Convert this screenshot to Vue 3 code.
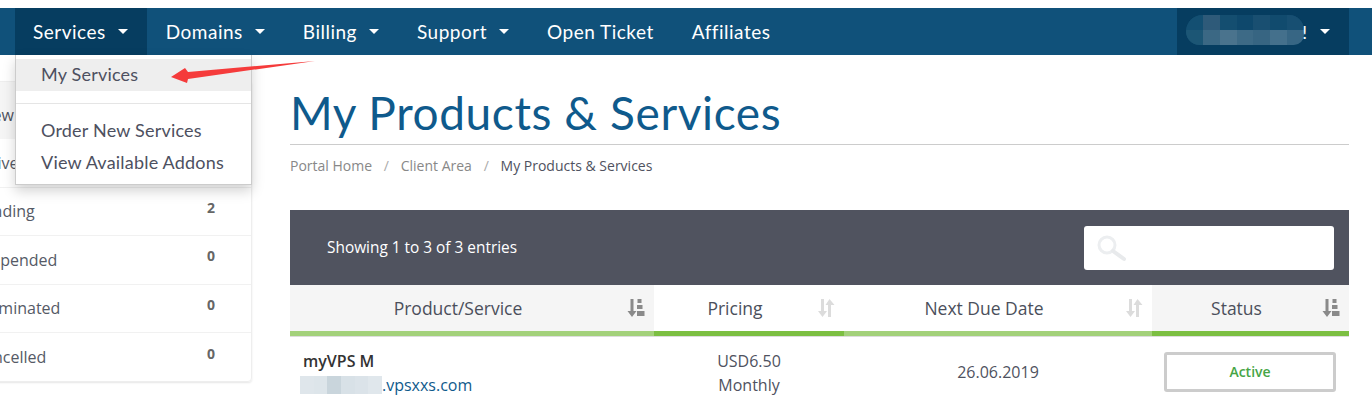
<script setup>
const navItems = [
  { label: 'Services', caret: true, active: true },
  { label: 'Domains', caret: true },
  { label: 'Billing', caret: true },
  { label: 'Support', caret: true },
  { label: 'Open Ticket' },
  { label: 'Affiliates' }
]
const stats = [
  { label: 'Active', n: 1 },
  { label: 'Pending', n: 2 },
  { label: 'Suspended', n: 0 },
  { label: 'Terminated', n: 0 },
  { label: 'Cancelled', n: 0 }
]
const columns = [
  { label: 'Product/Service', sort: 'on', cls: 'c1' },
  { label: 'Pricing', sort: 'off', cls: 'c2 sorted' },
  { label: 'Next Due Date', sort: 'off', cls: 'c3' },
  { label: 'Status', sort: 'on', cls: 'c4' }
]
const userCells = ['#134f72','#2e5a79','#144e70','#0e486c','#194f71','#114b6e','#174f72','#1c5675','#3b6884','#4a738d','#3d6a86','#376582','#44708c','#376684','#35627f']
const domainCells = ['#dfe6eb','#dde5ea','#c9d5dc','#d8e1e7','#dbe3e9','#e0e7ec']
</script>

<template>
  <div class="page">
    <nav class="nav">
      <ul class="menu">
        <li v-for="item in navItems" :key="item.label" class="menu-item" :class="{ active: item.active }">
          {{ item.label }}<span v-if="item.caret" class="caret"></span>
        </li>
      </ul>
      <div class="account">
        <div class="user-blur">
          <span v-for="(c, i) in userCells" :key="i" :style="{ background: c }"></span>
        </div>
        <span class="bang">!</span><span class="caret"></span>
      </div>
    </nav>

    <div class="dropdown">
      <div class="dd-item dd-active">My Services</div>
      <div class="dd-divider"></div>
      <div class="dd-item">Order New Services</div>
      <div class="dd-item">View Available Addons</div>
    </div>

    <svg class="arrow" width="150" height="26" viewBox="0 0 150 26">
      <path d="M0 17 L14 8 L17 12 L144 1 L17 19 L16 23 Z" fill="#f53b3b" />
    </svg>

    <div class="content">
      <aside class="sidebar">
        <div class="side-head">View</div>
        <div v-for="s in stats" :key="s.label" class="side-row">
          <span>{{ s.label }}</span><b>{{ s.n }}</b>
        </div>
      </aside>

      <main class="main">
        <h1 class="title">My Products &amp; Services</h1>
        <div class="crumbs">
          <span>Portal Home</span><i>/</i><span>Client Area</span><i>/</i><span class="current">My Products &amp; Services</span>
        </div>

        <div class="table-top">
          <span>Showing 1 to 3 of 3 entries</span>
          <div class="search">
            <svg width="34" height="28" viewBox="0 0 34 28">
              <circle cx="11" cy="11" r="8" fill="none" stroke="#eceef0" stroke-width="3" />
              <path d="M17 17 L28 25" stroke="#e8eaec" stroke-width="4" stroke-linecap="round" />
            </svg>
          </div>
        </div>

        <div class="thead">
          <div v-for="c in columns" :key="c.label" class="th" :class="c.cls">
            <span>{{ c.label }}</span>
            <svg v-if="c.sort === 'on'" class="sort" width="18" height="20" viewBox="0 0 18 20">
              <path d="M3.5 1 H6.5 V13 H9.5 L5 19 L0.5 13 H3.5 Z" fill="#8a8a8a" />
              <path d="M10.5 1 H14.5 V5 H10.5 Z M10 7 H15.5 V11 H10 Z M10 13 H17.5 V18 H10 Z" fill="#8a8a8a" />
            </svg>
            <svg v-else class="sort" width="18" height="20" viewBox="0 0 18 20">
              <path d="M4 1 H7 V13 H10 L5.5 19 L1 13 H4 Z" fill="#dcdcdc" />
              <path d="M11 19 H14 V7 H17.5 L12.5 1 L8.5 7 H11 Z" fill="#dcdcdc" />
            </svg>
          </div>
        </div>

        <div class="row">
          <div class="td c1 product">
            <strong>myVPS M</strong>
            <div class="domain">
              <div class="domain-blur"><span v-for="(c, i) in domainCells" :key="i" :style="{ background: c }"></span></div>
              <a>.vpsxxs.com</a>
            </div>
          </div>
          <div class="td c2 center">USD6.50<br />Monthly</div>
          <div class="td c3 center">26.06.2019</div>
          <div class="td c4 center"><span class="status">Active</span></div>
        </div>
      </main>
    </div>
  </div>
</template>

<style>
html, body { margin: 0; background: #fff; overflow: hidden; }
</style>

<style scoped>
.page {
  position: relative;
  width: 1372px;
  height: 404px;
  overflow: hidden;
  padding-top: 8px;
  box-sizing: border-box;
  font-family: "Open Sans", sans-serif;
  color: #4f5260;
}
.nav {
  height: 47px;
  background: #10517a;
  display: flex;
  justify-content: space-between;
  padding: 0 23px 0 15px;
}
.menu { display: flex; list-style: none; margin: 0; padding: 0; }
.menu-item {
  display: flex;
  align-items: center;
  padding: 0 19px;
  color: #fff;
  font: 19px/47px Lato, sans-serif;
  letter-spacing: 0.5px;
}
.menu-item:first-child { padding-left: 18px; }
.menu-item.active { background: #063d60; }
.caret {
  display: inline-block;
  width: 0;
  height: 0;
  margin-left: 12px;
  border-left: 5px solid transparent;
  border-right: 5px solid transparent;
  border-top: 5px solid #fff;
}
.account {
  position: relative;
  width: 172px;
  background: #063d60;
  display: flex;
  align-items: center;
  justify-content: flex-end;
  padding-right: 19px;
  box-sizing: border-box;
  color: #fff;
  font: 18px Lato, sans-serif;
}
.account .caret { margin-left: 13px; }
.bang { position: relative; z-index: 1; }
.user-blur {
  position: absolute;
  left: 9px;
  top: 7px;
  width: 118px;
  height: 30px;
  border-radius: 22px 20px 14px 18px;
  overflow: hidden;
  display: grid;
  grid-template-columns: repeat(7, 1fr);
  grid-template-rows: 1fr 1fr;
  background: #144e70;
}
.dropdown {
  position: absolute;
  left: 15px;
  top: 55px;
  width: 237px;
  height: 130px;
  box-sizing: border-box;
  padding-top: 4px;
  background: #fff;
  border: 1px solid #ccc;
  border-top: 0;
  box-shadow: 0 6px 12px rgba(0, 0, 0, 0.175);
  font: 18px/30px Lato, sans-serif;
  letter-spacing: 0.2px;
  color: #4d5060;
  z-index: 3;
}
.dd-item { padding: 0 0 2px 25px; }
.dd-active { background: #eee; }
.dd-divider { height: 1px; margin: 12px 0 11px; background: #e5e5e5; }
.arrow { position: absolute; left: 171px; top: 60px; z-index: 4; }
.content { display: flex; }
.sidebar {
  width: 279px;
  margin: 26px 0 0 -27px;
  height: 301px;
  box-sizing: border-box;
  border: 1px solid #eee;
  border-radius: 4px;
  box-shadow: 0 1px 2px rgba(0, 0, 0, 0.1);
  flex: none;
}
.side-head {
  height: 57px;
  line-height: 66px;
  padding-left: 5px;
  background: #f5f5f5;
  font-size: 16px;
}
.side-row {
  height: 48.5px;
  box-sizing: border-box;
  border-bottom: 1px solid #f1f1f1;
  padding: 0 36px 0 0;
  display: flex;
  justify-content: space-between;
  align-items: center;
  font-size: 16px;
  color: #555a66;
}
.side-row:last-child { border-bottom: 0; }
.side-row b { font-size: 14px; font-weight: 700; margin-top: -8px; color: #666; }
.main { margin-left: 38px; width: 1059px; flex: none; }
.title {
  margin: 0;
  height: 90px;
  box-sizing: border-box;
  padding-top: 29px;
  border-bottom: 1px solid #ccc;
  font: 400 46px/58px Lato, sans-serif;
  letter-spacing: 0.6px;
  color: #0f5a8c;
}
.crumbs {
  height: 65px;
  padding-top: 11px;
  box-sizing: border-box;
  font-size: 14px;
  line-height: 19px;
  color: #888;
}
.crumbs i { font-style: normal; margin: 0 11.75px; color: #aaa; }
.crumbs .current { color: #4f5260; }
.table-top {
  height: 75px;
  background: #50535f;
  color: #fff;
  font-size: 15.4px;
  display: flex;
  align-items: center;
  justify-content: space-between;
  padding: 0 15px 0 37px;
}
.search {
  width: 250px;
  height: 44px;
  background: #fff;
  border-radius: 3px;
  display: flex;
  align-items: center;
  padding-left: 12px;
  box-sizing: border-box;
}
.thead { display: flex; border-bottom: 1px solid #ddd; }
.th {
  position: relative;
  height: 51px;
  box-sizing: border-box;
  display: flex;
  align-items: center;
  justify-content: center;
  background: #f5f5f5;
  border-bottom: 5px solid #a3d17a;
  font-size: 17.5px;
  color: #4b4f5b;
  padding: 0 28px 0 0;
}
.th.sorted { background: #fff; border-bottom-color: #7cbf42; }
.sort { position: absolute; right: 9px; top: 13px; }
.c1 { width: 364px; }
.c2 { width: 190px; }
.c3 { width: 308px; }
.c4 { width: 197px; }
.th.c3 { background: #fff; }
.th.c4 { border-bottom-color: #7cbf42; }
.row { display: flex; }
.td { box-sizing: border-box; font-size: 16px; line-height: 24px; padding-top: 12px; }
.center { text-align: center; }
.td.c3 { padding-top: 23px; }
.product { padding-left: 13px; line-height: 24px; }
.product strong { display: block; font-weight: 600; color: #333; line-height: 24px; }
.domain { display: flex; }
.domain a { color: #0f5a8c; }
.domain-blur {
  width: 82px;
  height: 18px;
  margin-top: 3px;
  margin-left: -3px;
  display: grid;
  grid-template-columns: repeat(6, 1fr);
}
.status {
  display: block;
  width: 172px;
  height: 40px;
  margin: 3px 0 0 12px;
  box-sizing: border-box;
  border: 3px solid #ccc;
  border-radius: 3px;
  font-size: 14px;
  font-weight: 600;
  line-height: 34px;
  color: #46a546;
}
</style>
